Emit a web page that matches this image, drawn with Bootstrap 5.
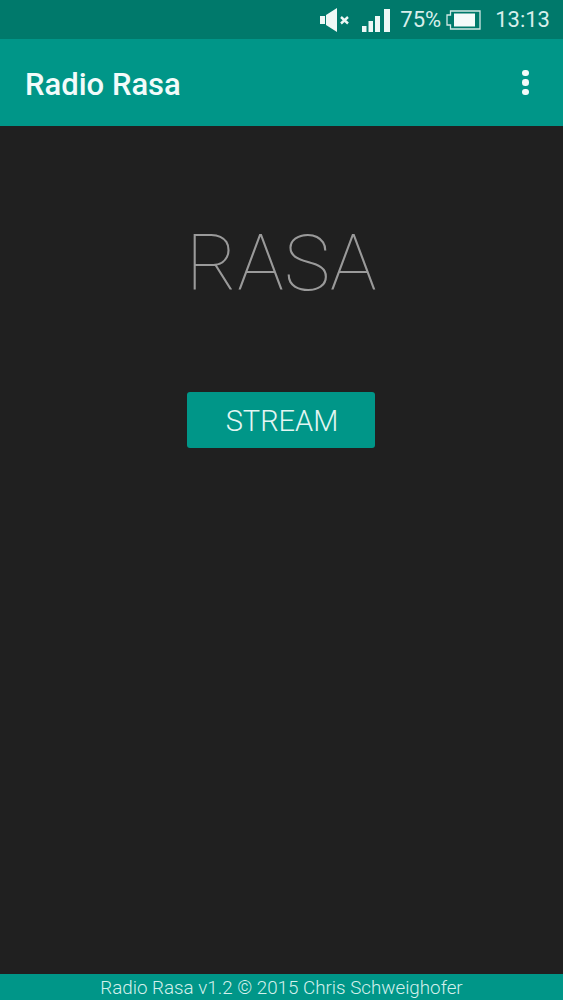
<!doctype html>
<html lang="en">
<head>
<meta charset="utf-8">
<title>Radio Rasa</title>
<link rel="stylesheet" href="https://cdn.jsdelivr.net/npm/bootstrap@5.3.0/dist/css/bootstrap.min.css">
<style>
html,body{height:100%;}
body{font-family:Roboto,"Liberation Sans",sans-serif;background:#202020;color:#fff;}
.app-shell{height:1000px;overflow:hidden;}
.status-strip{height:39px;background:#00796b;padding-right:13px;color:#d8efeb;font-size:22px;font-weight:400;}
.status-pct{margin-left:9px;margin-right:5px;}
.status-time{margin-left:14px;}
.bars-icon{margin-left:12px;}
.app-strip{height:87px;background:#009688;padding:3px 34px 0 25px;}
.app-name{font-size:31px;font-weight:500;color:#f2fbfa;margin:0;line-height:1;}
.kebab{width:7px;margin-top:-3px;gap:3px;}
.kebab span{display:block;width:6.500px;height:6.500px;border-radius:50%;background:#f2fbfa;}
.stage{background:#202020;}
.logo-word{font-size:78px;font-weight:100;color:#9a9a9a;line-height:1;margin-top:99px;margin-bottom:0;}
.stream-btn{width:188px;height:56px;margin-top:89px;margin-right:1px;background:#009688;border:0;border-radius:3px;color:#e3f6f3;font-size:29px;font-weight:300;padding:4px 0 0 2px;}
.stream-btn:hover{background:#009688;color:#e3f6f3;}
.foot-strip{height:26px;background:#009688;color:#d4f0ec;font-size:18.800px;font-weight:300;line-height:29px;}
</style>
</head>
<body>
<div class="app-shell d-flex flex-column">
  <div class="status-strip d-flex align-items-center justify-content-end">
    <svg width="30" height="26" viewBox="0 0 30 26" aria-hidden="true"><path d="M0 9h5v8H0zM6 8l11-7v24L6 18z" fill="#eef8f6"/><path d="M21 10l7 6.500M28 10l-7 6.500" stroke="#eef8f6" stroke-width="2.400"/></svg>
    <svg class="bars-icon" width="29" height="24" viewBox="0 0 29 24" aria-hidden="true"><path d="M0 18h4.500v6H0zM6.500 13H11v11H6.500zM13 8h5v16h-5zM22 1h6v23h-6z" fill="#eef8f6"/></svg>
    <span class="status-pct">75%</span>
    <svg width="35" height="20" viewBox="0 0 35 20" aria-hidden="true"><path d="M4.500 1H34V19H4.500V15H1V5H4.500Z" fill="none" stroke="#cfe9e5" stroke-width="1.300"/><rect x="8" y="3.500" width="21" height="13" fill="#f4fbfa"/></svg>
    <span class="status-time">13:13</span>
  </div>
  <div class="app-strip d-flex align-items-center justify-content-between">
    <h1 class="app-name">Radio Rasa</h1>
    <div class="kebab d-flex flex-column align-items-center"><span></span><span></span><span></span></div>
  </div>
  <main class="stage flex-grow-1 d-flex flex-column align-items-center">
    <p class="logo-word">RASA</p>
    <button type="button" class="btn stream-btn">STREAM</button>
  </main>
  <footer class="foot-strip text-center">Radio Rasa v1.2 © 2015 Chris Schweighofer</footer>
</div>
<script src="https://cdn.jsdelivr.net/npm/bootstrap@5.3.0/dist/js/bootstrap.bundle.min.js"></script>
</body>
</html>
